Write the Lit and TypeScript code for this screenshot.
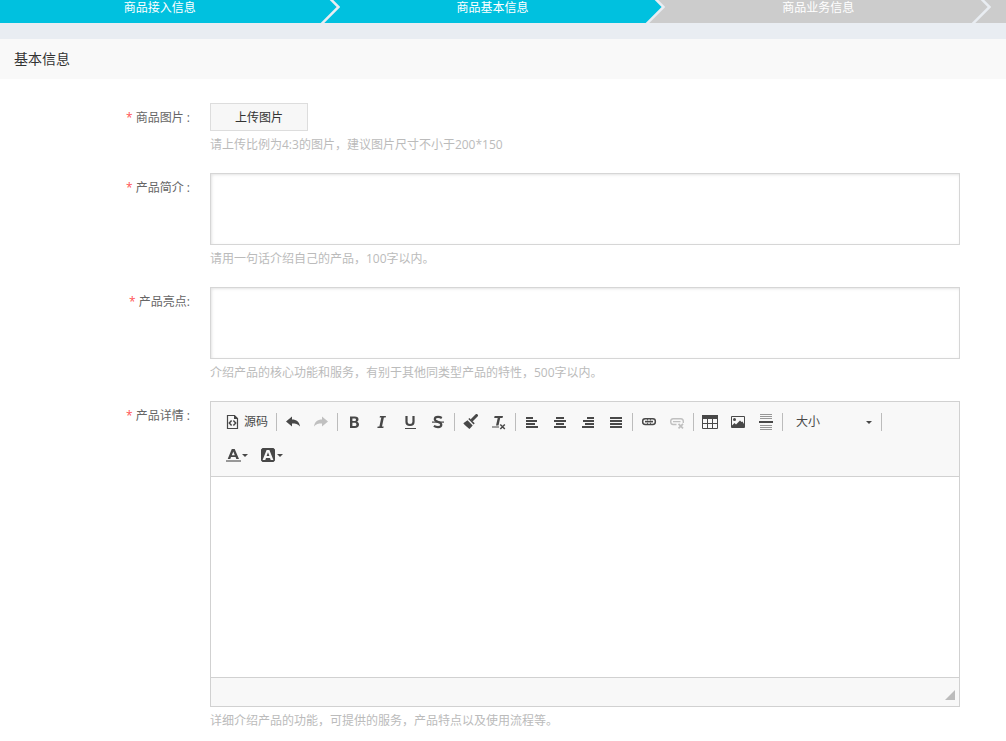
import { LitElement, html, svg, css, nothing, type TemplateResult } from "lit";
import { customElement, property } from "lit/decorators.js";

/* Toolbar glyphs, each drawn on a 16 x 16 grid. */
const glyphs: Record<string, TemplateResult> = {
  source: svg`
    <path d="M3.500 1.500h7l3 3v10h-10z" fill="none" stroke="currentColor" stroke-width="1.200"/>
    <path d="M10 1v4h4z" fill="currentColor"/>
    <path d="M7.600 6.500L5.300 9l2.300 2.500M9.400 6.500L11.700 9l-2.300 2.500" fill="none" stroke="currentColor" stroke-width="1.500"/>`,
  undo: svg`<path d="M1 7.500L7 2.500V5.500C11.500 5.500 14.500 8 15 12.500C13 10 10.500 9.500 7 9.500V12.500z" fill="currentColor"/>`,
  redo: svg`<path d="M15 7.500L9 2.500V5.500C4.500 5.500 1.500 8 1 12.500C3 10 5.500 9.500 9 9.500V12.500z" fill="currentColor"/>`,
  bold: svg`<path fill-rule="evenodd" d="M4 2.500H8.800C11.300 2.500 12.500 3.500 12.500 5.200C12.500 6.500 11.800 7.400 10.700 7.700C12.200 8 13 9.100 13 10.500C13 12.700 11.500 14 8.900 14H4zM6.400 4.400V7H8.200C9.500 7 10 6.500 10 5.700C10 4.800 9.500 4.400 8.200 4.400zM6.400 8.800V12H8.400C9.800 12 10.400 11.500 10.400 10.400C10.400 9.300 9.800 8.800 8.400 8.800z" fill="currentColor"/>`,
  italic: svg`<path d="M6 2H12L11.600 3.600H9.900L8 12.400H9.700L9.300 14H3.300L3.700 12.400H5.400L7.300 3.600H5.600z" fill="currentColor"/>`,
  underline: svg`
    <path d="M4.500 2V8C4.500 10.200 5.800 11 8 11S11.500 10.200 11.500 8V2" fill="none" stroke="currentColor" stroke-width="2.200"/>
    <path d="M3 14h11v1H3z" fill="currentColor"/>`,
  strike: svg`
    <path d="M11.800 4C10.500 3.200 9.300 2.900 8 2.900C6 2.900 4.800 3.700 4.800 5.200C4.800 6.700 6 7.200 8 7.900C10.300 8.600 11.300 9.400 11.300 10.800C11.300 12.300 10 13.100 8 13.100C6.500 13.100 5 12.700 3.900 11.900" fill="none" stroke="currentColor" stroke-width="2.200"/>
    <path d="M2 7.500h12v1.200H2z" fill="currentColor"/>`,
  brush: svg`
    <path d="M13.500 1.500L9.500 5.500" stroke="currentColor" stroke-width="3" stroke-linecap="round"/>
    <path d="M6.400 4L11.700 9.300L10.600 10.400L5.300 5.100z" fill="currentColor"/>
    <path d="M4.500 6.200L9.700 11.400L6.500 15L5.500 14.200L4.700 13.600L3.700 12.800L3 12L2 11.200L.3 9.300z" fill="currentColor"/>`,
  clear: svg`
    <path d="M3.600 2H12L11.500 4H9.200L7.500 11.500H5L6.700 4H3.200z" fill="currentColor"/>
    <path d="M1 12.500H8v1H1z" fill="currentColor"/>
    <path d="M9.300 10.500L13.800 15M13.800 10.500L9.300 15" stroke="currentColor" stroke-width="1.500"/>`,
  linesLeft: svg`<path d="M2 3h7v2H2zM2 6h11v2H2zM2 9h9v2H2zM2 12h12v2H2z" fill="currentColor"/>`,
  linesCenter: svg`<path d="M4 3h8v2H4zM2 6h12v2H2zM4 9h8v2H4zM2 12h12v2H2z" fill="currentColor"/>`,
  linesRight: svg`<path d="M7 3h7v2H7zM3 6h11v2H3zM5 9h9v2H5zM2 12h12v2H2z" fill="currentColor"/>`,
  linesFull: svg`<path d="M2 3h12v2H2zM2 6h12v2H2zM2 9h12v2H2zM2 12h12v2H2z" fill="currentColor"/>`,
  link: svg`
    <rect x="1.700" y="4.700" width="12.600" height="5.800" rx="2.400" fill="none" stroke="currentColor" stroke-width="1.500"/>
    <path d="M4 7.600H12" stroke="currentColor" stroke-width="1.600"/>
    <path d="M6.500 5v1.500M6.500 8.700v1.500M9.500 5v1.500M9.500 8.700v1.500" stroke="currentColor" stroke-width=".8"/>`,
  unlink: svg`
    <path d="M7.500 10.500H4.100C2.600 10.500 1.700 9.500 1.700 7.600S2.600 4.700 4.100 4.700H11.900C13.400 4.700 14.300 5.700 14.300 7.600V9M4 7.600H11.500" fill="none" stroke="currentColor" stroke-width="1.400"/>
    <path d="M9.500 9.800L14 14.300M14 9.800L9.500 14.300" stroke="currentColor" stroke-width="1.700"/>`,
  table: svg`
    <path d="M0 1h16v4H0z" fill="currentColor"/>
    <path d="M.5 4.500v10h15v-10M0 9.500h16M5.500 5v9.500M10.500 5v9.500" fill="none" stroke="currentColor"/>`,
  image: svg`
    <path d="M1.500 2.500h13v11h-13z" fill="none" stroke="currentColor"/>
    <circle cx="4.500" cy="5.500" r="1.500" fill="currentColor"/>
    <path d="M2 13V11.500L4.500 9L6 10.500L10 6.500L11.500 8L12.500 7.500L14 10V13z" fill="currentColor"/>`,
  pagebreak: svg`
    <path d="M2 .5h12M2 2.500h12M2 4.500h12M2 11.500h12M2 13.500h12M2 15.500h12" stroke="currentColor" opacity=".55"/>
    <path d="M1 7h14v2H1z" fill="currentColor"/>`,
  textColor: svg`
    <path fill-rule="evenodd" d="M5.800 2H8.700L13 12H10.300L9.600 10.100H5L4.300 12H1.700zM7.300 4.500L5.800 8.200H8.800z" fill="currentColor"/>
    <path d="M0 13h15v2H0z" fill="currentColor" opacity=".55"/>`,
  bgColor: svg`
    <path fill-rule="evenodd" d="M1.500 1H12.500L14 2.500V13.500L12.500 15H1.500L0 13.500V2.500zM5.600 3L1.600 13H4.300L5 11H9L9.700 13H12.400L8.400 3zM7 5.300L8.400 9H5.600z" fill="currentColor"/>`,
};

interface Tool {
  icon: string;
  label: string;
  text?: string;
  disabled?: boolean;
  menu?: boolean;
}

const firstRow: Tool[][] = [
  [{ icon: "source", label: "源码", text: "源码" }],
  [
    { icon: "undo", label: "撤消" },
    { icon: "redo", label: "重做", disabled: true },
  ],
  [
    { icon: "bold", label: "加粗" },
    { icon: "italic", label: "倾斜" },
    { icon: "underline", label: "下划线" },
    { icon: "strike", label: "删除线" },
  ],
  [
    { icon: "brush", label: "复制格式" },
    { icon: "clear", label: "清除格式" },
  ],
  [
    { icon: "linesLeft", label: "左对齐" },
    { icon: "linesCenter", label: "居中" },
    { icon: "linesRight", label: "右对齐" },
    { icon: "linesFull", label: "两端对齐" },
  ],
  [
    { icon: "link", label: "插入超链接" },
    { icon: "unlink", label: "取消超链接", disabled: true },
  ],
  [
    { icon: "table", label: "表格" },
    { icon: "image", label: "图像" },
    { icon: "pagebreak", label: "分页符" },
  ],
];

const secondRow: Tool[] = [
  { icon: "textColor", label: "文本颜色", menu: true },
  { icon: "bgColor", label: "背景颜色", menu: true },
];

const caret = html`<svg class="caret" width="6" height="3" viewBox="0 0 6 3" aria-hidden="true">
  <path d="M0 0h6L3 3z" fill="currentColor" />
</svg>`;

const fontStack = css`"Open Sans", "Noto Sans CJK SC", sans-serif`;

@customElement("step-bar")
class StepBar extends LitElement {
  static styles = css`
    :host {
      display: block;
      background: #ccc;
      border-bottom: 16px solid #e9edf2;
    }
    .steps {
      display: grid;
      grid-template-columns: calc((100% - 14px) / 3 + 14px) 1fr 1fr;
      margin: 0;
      padding: 0 15px 0 0;
      list-style: none;
    }
    .step {
      position: relative;
      box-sizing: border-box;
      height: 23px;
      padding-right: 20px;
      color: #fff;
      line-height: 16px;
      text-align: center;
      background: #ccc;
    }
    .done {
      background: #00c1df;
    }
    .arrow {
      position: absolute;
      top: 0;
      right: 0;
    }
  `;

  render() {
    const steps = [
      { name: "商品接入信息", done: true, next: "#00c1df" },
      { name: "商品基本信息", done: true, next: "#ccc" },
      { name: "商品业务信息", done: false, next: "#ccc" },
    ];
    return html`<ol class="steps">
      ${steps.map(
        (s) => html`<li class="step ${s.done ? "done" : ""}">
          ${s.name}
          <svg class="arrow" width="20" height="23" viewBox="0 0 20 23" aria-hidden="true">
            <path d="M10 -2L18.500 7L1 24.500H20V-2z" fill=${s.next} />
            <path d="M9.500 -2L18.500 7L1 24.500" fill="none" stroke="#e9edf2" stroke-width="2.500" />
          </svg>
        </li>`,
      )}
    </ol>`;
  }
}

@customElement("rich-editor")
class RichEditor extends LitElement {
  static formAssociated = true;
  static shadowRootOptions = { ...LitElement.shadowRootOptions, delegatesFocus: true };

  @property() label = "";

  static styles = css`
    :host {
      display: block;
      border: 1px solid #d1d1d1;
      color: #484848;
    }
    .toolbar {
      display: flex;
      flex-direction: column;
      gap: 9px;
      padding: 8px 7px 9px;
      background: #f8f8f8;
      border-bottom: 1px solid #d1d1d1;
    }
    .row,
    .group {
      display: flex;
      align-items: center;
    }
    .row {
      flex-wrap: wrap;
    }
    .group::after {
      content: "";
      width: 1px;
      height: 18px;
      margin: 0 2px;
      background: #bcbcbc;
    }
    .tool {
      display: flex;
      align-items: center;
      gap: 4px;
      height: 24px;
      padding: 0 6px;
      border: 0;
      background: none;
      color: inherit;
      font: 12px/24px ${fontStack};
    }
    .menu {
      gap: 0;
      padding: 0 5px 0 8px;
    }
    .tool:disabled {
      color: #c0c0c0;
    }
    .icon,
    .caret {
      display: block;
      flex: none;
    }
    .size {
      position: relative;
      display: flex;
      width: 94px;
    }
    .size .caret {
      position: absolute;
      top: 11px;
      right: 7px;
      pointer-events: none;
    }
    .select {
      width: 100%;
      height: 24px;
      padding: 0 20px 0 11px;
      border: 0;
      appearance: none;
      background: none;
      color: inherit;
      font: 12px/24px ${fontStack};
    }
    .content {
      display: block;
      box-sizing: border-box;
      width: 100%;
      height: 200px;
      padding: 12px;
      border: 0;
      resize: none;
      outline: none;
      background: #fff;
      font: 12px/20px ${fontStack};
    }
    .footer {
      display: flex;
      align-items: flex-end;
      justify-content: flex-end;
      box-sizing: border-box;
      height: 29px;
      padding: 0 4px 6px;
      border-top: 1px solid #d1d1d1;
      background: #f8f8f8;
    }
    .grip {
      width: 10px;
      height: 10px;
      background: #bcbcbc;
      clip-path: polygon(100% 0, 100% 100%, 0 100%);
    }
  `;

  private tool(t: Tool) {
    return html`<button
      type="button"
      class="tool ${t.menu ? "menu" : ""}"
      aria-label=${t.label}
      ?disabled=${t.disabled}
    >
      <svg class="icon" width="16" height="16" viewBox="0 0 16 16" aria-hidden="true">${glyphs[t.icon]}</svg>
      ${t.text ?? nothing}${t.menu ? caret : nothing}
    </button>`;
  }

  render() {
    return html`
      <div class="toolbar" role="toolbar">
        <div class="row">
          ${firstRow.map((g) => html`<div class="group">${g.map((t) => this.tool(t))}</div>`)}
          <div class="group">
            <div class="size">
              <select class="select" aria-label="大小">
                <option>大小</option>
              </select>
              ${caret}
            </div>
          </div>
        </div>
        <div class="row">${secondRow.map((t) => this.tool(t))}</div>
      </div>
      <textarea class="content" aria-label=${this.label}></textarea>
      <div class="footer"><span class="grip"></span></div>
    `;
  }
}

@customElement("app-root")
class AppRoot extends LitElement {
  static styles = css`
    :host {
      display: block;
      background: #fff;
      color: #666;
      font: 12px/16px ${fontStack};
    }
    .title {
      margin: 0;
      padding: 0 14px;
      background: #f9f9f9;
      color: #333;
      font-size: 14px;
      font-weight: 400;
      line-height: 40px;
    }
    .form {
      display: grid;
      gap: 14px;
      padding: 24px 46px 6px 0;
    }
    .row {
      display: grid;
      grid-template-columns: 190px minmax(0, 1fr);
      column-gap: 20px;
    }
    .label {
      line-height: 30px;
      text-align: right;
    }
    .star {
      color: #f55;
    }
    .upload {
      display: block;
      width: 98px;
      height: 28px;
      padding: 0;
      border: 1px solid #ddd;
      background: #f7f7f7;
      color: #333;
      font: 12px/28px ${fontStack};
    }
    .text {
      display: block;
      box-sizing: border-box;
      width: 100%;
      height: 72px;
      padding: 6px;
      border: 1px solid #d6d6d6;
      border-radius: 0;
      resize: none;
      outline: none;
      background: #fff;
      box-shadow: inset 1px 1px 3px #e4e4e4;
      font: 12px/20px ${fontStack};
    }
    .hint {
      margin: 0;
      color: #bbb;
      line-height: 28px;
    }
  `;

  private row(id: string, label: string, field: TemplateResult, hint: string) {
    return html`<div class="row">
      <label class="label" for=${id}><span class="star">*</span> ${label}</label>
      <div>
        ${field}
        <p class="hint">${hint}</p>
      </div>
    </div>`;
  }

  render() {
    return html`
      <step-bar></step-bar>
      <h1 class="title">基本信息</h1>
      <form class="form">
        ${this.row(
          "picture",
          "商品图片 :",
          html`<button type="button" id="picture" class="upload">上传图片</button>`,
          "请上传比例为4:3的图片，建议图片尺寸不小于200*150",
        )}
        ${this.row(
          "summary",
          "产品简介 :",
          html`<textarea id="summary" class="text"></textarea>`,
          "请用一句话介绍自己的产品，100字以内。",
        )}
        ${this.row(
          "highlights",
          "产品亮点:",
          html`<textarea id="highlights" class="text"></textarea>`,
          "介绍产品的核心功能和服务，有别于其他同类型产品的特性，500字以内。",
        )}
        ${this.row(
          "detail",
          "产品详情 :",
          html`<rich-editor id="detail" label="产品详情"></rich-editor>`,
          "详细介绍产品的功能，可提供的服务，产品特点以及使用流程等。",
        )}
      </form>
    `;
  }
}
